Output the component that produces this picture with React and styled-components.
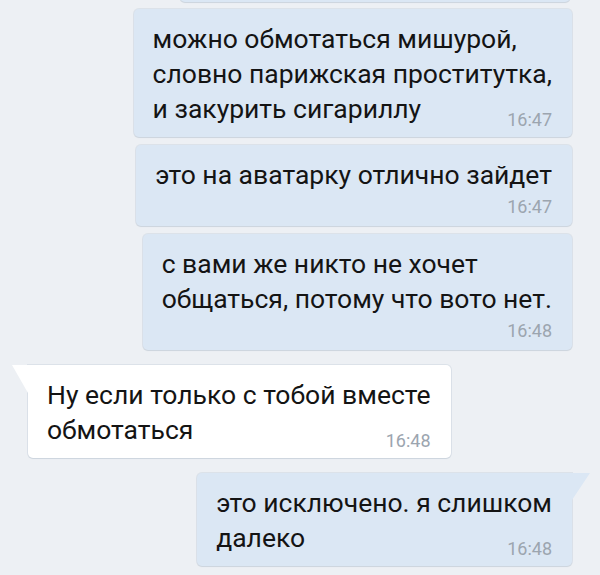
import React from 'react';
import styled, { createGlobalStyle, css } from 'styled-components';

const GlobalStyle = createGlobalStyle`
  html, body {
    margin: 0;
    padding: 0;
    background: #edf0f4;
  }
  body {
    font-family: Roboto, "Noto Sans", "Liberation Sans", sans-serif;
    overflow: hidden;
  }
`;

const Screen = styled.div`
  width: 600px;
  height: 575px;
  background: #edf0f4;
  overflow: hidden;
`;

const Feed = styled.div`
  display: flex;
  flex-direction: column;
  padding: 0 28px;
`;

const Bubble = styled.div`
  position: relative;
  box-sizing: border-box;
  align-self: ${p => (p.$out ? 'flex-end' : 'flex-start')};
  margin-top: ${p => p.$gap}px;
  padding: 12px 20px 11px 19px;
  border-radius: 5px;
  background: ${p => (p.$out ? '#dbe7f4' : '#ffffff')};
  box-shadow: 0 0 0 1px rgba(160, 178, 198, 0.22), 0 1px 1px rgba(60, 80, 110, 0.1);
  color: #141414;

  ${p => p.$tail && !p.$out && css`
    border-top-left-radius: 0;
    &::before {
      content: '';
      position: absolute;
      left: -16px;
      top: 0;
      width: 16px;
      height: 28px;
      background: #ffffff;
      clip-path: polygon(0 0, 100% 0, 100% 100%);
    }
  `}

  ${p => p.$tail && p.$out && css`
    border-top-right-radius: 0;
    &::before {
      content: '';
      position: absolute;
      right: -18px;
      top: 0;
      width: 18px;
      height: 27px;
      background: #dbe7f4;
      clip-path: polygon(0 0, 100% 0, 0 100%);
    }
  `}
`;

const Ghost = styled(Bubble)`
  width: 390px;
  height: 40px;
  margin-right: 2px;
`;

const Line = styled.div`
  font-size: 26.5px;
  line-height: 35px;
  white-space: nowrap;
  display: flex;
  align-items: flex-end;
`;

const Time = styled.span`
  font-size: 18px;
  line-height: 24px;
  color: #9ca5af;
  margin-left: auto;
  padding-left: 24px;
  margin-bottom: ${p => (p.$inline ? '-6px' : '0')};
`;

const TimeRow = styled.div`
  display: flex;
  justify-content: flex-end;
  margin: 3px 0 -4px;
`;

const messages = [
  {
    id: 1, out: true, gap: 7, inline: true, time: '16:47',
    lines: ['можно обмотаться мишурой,', 'словно парижская проститутка,', 'и закурить сигариллу'],
  },
  { id: 2, out: true, gap: 8, time: '16:47', lines: ['это на аватарку отлично зайдет'] },
  {
    id: 3, out: true, gap: 8, time: '16:48',
    lines: ['с вами же никто не хочет', 'общаться, потому что вото нет.'],
  },
  {
    id: 4, out: false, tail: true, gap: 15, inline: true, time: '16:48',
    lines: ['Ну если только с тобой вместе', 'обмотаться'],
  },
  {
    id: 5, out: true, tail: true, gap: 15, inline: true, time: '16:48',
    lines: ['это исключено. я слишком', 'далеко'],
  },
];

const Message = ({ msg }) => {
  const last = msg.lines.length - 1;
  return (
    <Bubble $out={msg.out} $tail={msg.tail} $gap={msg.gap}>
      {msg.lines.map((text, i) => (
        <Line key={i}>
          <span>{text}</span>
          {msg.inline && i === last && <Time $inline>{msg.time}</Time>}
        </Line>
      ))}
      {!msg.inline && (
        <TimeRow>
          <Time>{msg.time}</Time>
        </TimeRow>
      )}
    </Bubble>
  );
};

export default function App() {
  return (
    <Screen>
      <GlobalStyle />
      <Feed>
        <Ghost $out $gap={-38} />
        {messages.map(m => (
          <Message key={m.id} msg={m} />
        ))}
      </Feed>
    </Screen>
  );
}
